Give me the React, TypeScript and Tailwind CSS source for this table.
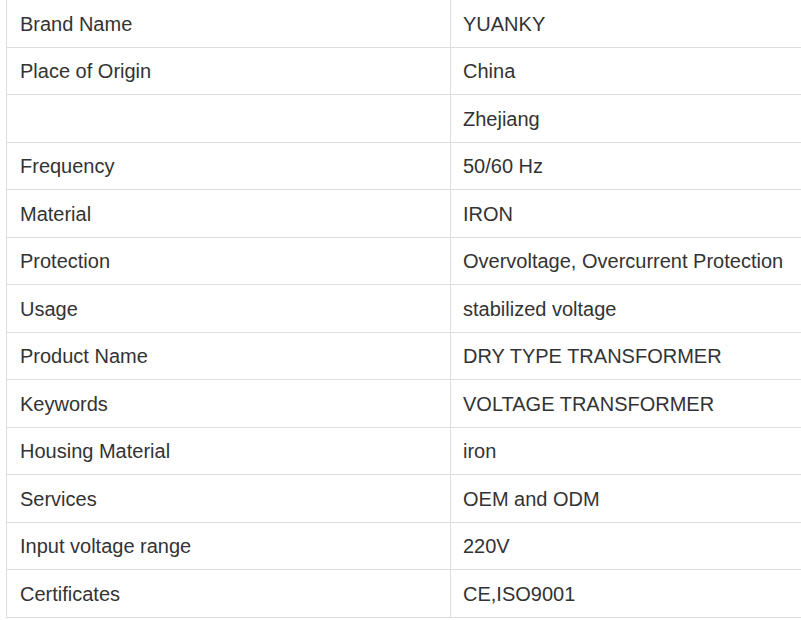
import React from 'react';

const rows: [string, string][] = [
  ['Brand Name', 'YUANKY'],
  ['Place of Origin', 'China'],
  ['', 'Zhejiang'],
  ['Frequency', '50/60 Hz'],
  ['Material', 'IRON'],
  ['Protection', 'Overvoltage, Overcurrent Protection'],
  ['Usage', 'stabilized voltage'],
  ['Product Name', 'DRY TYPE TRANSFORMER'],
  ['Keywords', 'VOLTAGE TRANSFORMER'],
  ['Housing Material', 'iron'],
  ['Services', 'OEM and ODM'],
  ['Input voltage range', '220V'],
  ['Certificates', 'CE,ISO9001'],
];

const App: React.FC = () => {
  return (
    <div className="w-[801px] h-[620px] overflow-hidden bg-white pl-[6px]">
      <div
        className="w-[900px] text-[20px] text-[#333333]"
        style={{ fontFamily: '"Liberation Sans", Arial, sans-serif' }}
      >
        {rows.map(([label, value], i) => (
          <div key={i} className="flex h-[47.5px] border-b border-[#dddddd]">
            <div className="w-[445px] shrink-0 flex items-center border-l border-r border-[#dddddd] pl-[13px] pt-[1px]">
              {label}
            </div>
            <div className="flex-1 flex items-center pl-[12px] pt-[1px]">{value}</div>
          </div>
        ))}
      </div>
    </div>
  );
};

export default App;
